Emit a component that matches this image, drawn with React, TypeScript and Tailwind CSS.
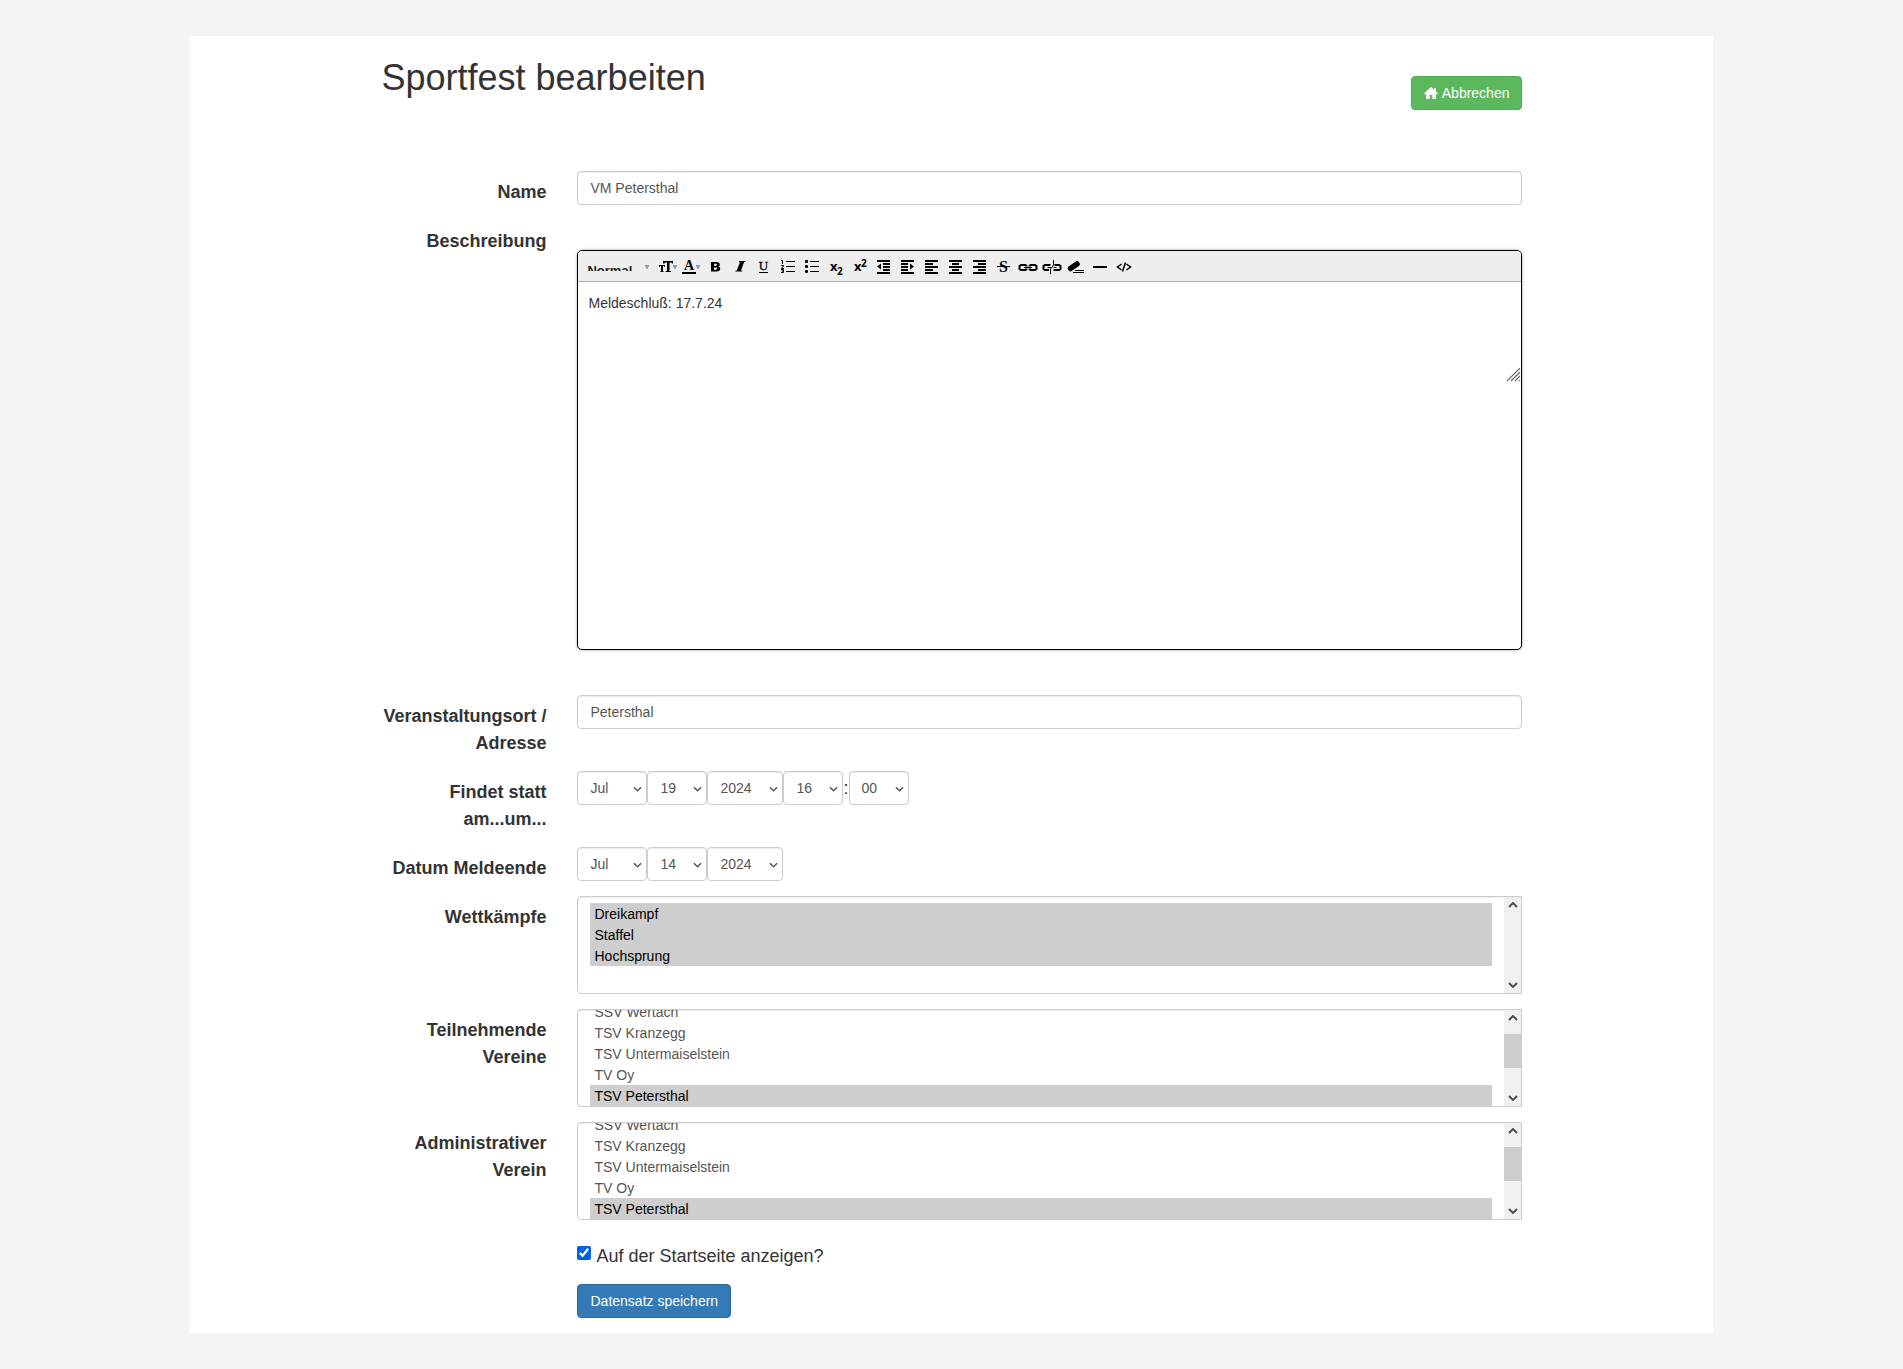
import { ReactNode, useEffect, useRef } from 'react';

const control =
  'rounded border border-[#ccc] bg-white text-sm text-[#555] shadow-[inset_0_1px_1px_rgba(0,0,0,0.075)]';

function Row({ label, id, children }: { label?: string; id?: string; children: ReactNode }) {
  return (
    <div className="mb-[15px] flex">
      <div className="-mb-px w-1/6 shrink-0 px-[15px] pt-2 text-right font-bold">
        {label && <label htmlFor={id}>{label}</label>}
      </div>
      <div className="min-w-0 flex-1 pr-[14px] pl-4">{children}</div>
    </div>
  );
}

function Chevron({ up = false, className = '' }: { up?: boolean; className?: string }) {
  return (
    <svg viewBox="0 0 10 6" className={className} fill="none" stroke="currentColor" strokeWidth="2">
      <path d={up ? 'M1 5 5 1l4 4' : 'M1 1l4 4 4-4'} />
    </svg>
  );
}

function Pick({ id, label, value, width }: { id: string; label: string; value: string; width: string }) {
  return (
    <span className={`relative ${width}`}>
      <select id={id} aria-label={label} defaultValue={value} className={`${control} h-[34px] w-full appearance-none px-3`}>
        <option>{value}</option>
      </select>
      <svg
        viewBox="0 0 10 6"
        className="pointer-events-none absolute top-[15px] right-[5px] h-[6px] w-[9px]"
        fill="none"
        stroke="#555"
        strokeWidth="1.6"
      >
        <path d="M1 1l4 4 4-4" />
      </svg>
    </span>
  );
}

function ListBox({ id, options, selected, scroll = 0 }: { id: string; options: string[]; selected: string[]; scroll?: number }) {
  const ref = useRef<HTMLSelectElement>(null);
  useEffect(() => {
    const frame = requestAnimationFrame(() => {
      if (ref.current) ref.current.scrollTop = scroll;
    });
    return () => cancelAnimationFrame(frame);
  }, [scroll]);
  return (
    <div className={`${control} flex h-[98px] overflow-hidden rounded-r-none`}>
      <select
        ref={ref}
        id={id}
        multiple
        defaultValue={selected}
        className="h-full min-w-0 flex-1 appearance-none overflow-y-scroll bg-transparent px-3 py-[6px] outline-none [scrollbar-width:none]"
      >
        {options.map((o) => (
          <option
            key={o}
            className="h-[21px] px-1 pt-[3px] pb-0 checked:bg-[linear-gradient(#cecece,#cecece)] checked:text-black"
          >
            {o}
          </option>
        ))}
      </select>
      <div className="flex w-[17px] flex-col items-center justify-between bg-[#f0f0f0] py-[5px] text-[#505050]">
        <Chevron up className="h-[6px] w-[10px]" />
        {scroll > 0 && <div className="mb-[15px] h-[34px] w-full bg-[#cdcdcd]" />}
        <Chevron className="h-[6px] w-[10px]" />
      </div>
    </div>
  );
}

const serif = { fontFamily: 'Liberation Serif, serif' };
const sans = { fontFamily: 'Open Sans, sans-serif' };

const lines = (rows: [number, number][]) =>
  rows.map(([x, w], i) => <rect key={i} x={x} y={3 + i * 3} width={w} height="2" />);

const tools: [string, ReactNode][] = [
  ['Fett', <path fillRule="evenodd" d="M5 5h5.500c2.200 0 3.300.9 3.300 2.500 0 1-.6 1.700-1.500 2 1.200.2 1.900 1 1.900 2.200 0 1.800-1.300 2.800-3.600 2.800H5zm3 1.800v2h1.700c.8 0 1.200-.3 1.200-1s-.4-1-1.200-1zm0 3.600v2.300H10c.8 0 1.200-.4 1.200-1.200s-.4-1.100-1.200-1.100z" />],
  ['Kursiv', <path d="M9 4h6.500v1h-1.300L11 13.500h1.200v1H5.500v-1h1.300L10 5H9z" />],
  ['Unterstrichen', <><text x="9.500" y="13" textAnchor="middle" fontSize="13" style={serif} stroke="#000" strokeWidth=".3">U</text><rect x="5" y="15" width="9" height="1" /></>],
  ['Nummerierte Liste', <><rect x="8" y="4" width="9" height="1" /><rect x="8" y="9" width="9" height="1" /><rect x="8" y="14" width="9" height="1" /><path fill="none" stroke="#000" d="M3 3.500h1.500V7M3 8.500h2.500v1l-2 1.500v.5H6M3 12.500h2.500v3H3m.5-1.500h2" /></>],
  ['Liste', <><rect x="8" y="4" width="9" height="1" /><rect x="8" y="9" width="9" height="1" /><rect x="8" y="14" width="9" height="1" /><rect x="3" y="3" width="3" height="3" rx="1" /><rect x="3" y="8" width="3" height="3" rx="1" /><rect x="3" y="13" width="3" height="3" rx="1" /></>],
  ['Tiefgestellt', <><text x="4" y="14" fontSize="13" fontWeight="700" style={sans}>x</text><text x="11" y="18" fontSize="10" fontWeight="700" style={sans}>2</text></>],
  ['Hochgestellt', <><text x="4" y="14" fontSize="13" fontWeight="700" style={sans}>x</text><text x="11" y="10" fontSize="10" fontWeight="700" style={sans}>2</text></>],
  ['Ausrücken', <>{lines([[3, 13], [9, 7], [9, 7], [9, 7], [3, 13]])}<path d="M3 9.500 7 6.500v6z" /></>],
  ['Einrücken', <>{lines([[3, 13], [3, 7], [3, 7], [3, 7], [3, 13]])}<path d="m16 9.500-4-3v6z" /></>],
  ['Linksbündig', lines([[3, 13], [3, 8], [3, 13], [3, 8], [3, 13]])],
  ['Zentriert', lines([[3, 13], [6, 7], [3, 13], [6, 7], [3, 13]])],
  ['Rechtsbündig', lines([[3, 13], [8, 8], [3, 13], [8, 8], [3, 13]])],
  ['Durchgestrichen', <><text x="9.500" y="15" textAnchor="middle" fontSize="16" fontWeight="700" style={serif}>S</text><rect x="3" y="9" width="13" height="1" /></>],
  ['Link', <><path fill="none" stroke="#000" strokeWidth="2" d="M8.500 9.500V9L7.500 8H3L1.500 9v3L3 13h4.500l1-1v-.5M11.500 9.500V9l1-1H17l1.500 1v3L17 13h-4.500l-1-1v-.5" /><rect x="6" y="10" width="8" height="1" /></>],
  ['Link entfernen', <><path fill="none" stroke="#000" strokeWidth="2" d="M8.500 8H3L1.500 9v3L3 13h4M12.500 8H17l1.500 1v3L17 13h-5.500" /><path fill="none" stroke="#000" d="M5.500 10.500H9M11.500 10.500h3M11.500 3v5L8.500 12v5" /></>],
  ['Formatierung entfernen', <><path fill="none" stroke="#000" strokeWidth="5.500" strokeLinecap="round" d="M4.500 11.500 11 7" /><rect x="9" y="13" width="9" height="1" /><rect x="7" y="15" width="11" height="1" /></>],
  ['Linie', <rect x="3" y="9" width="14" height="2" />],
  ['Quelltext', <path fill="none" stroke="#000" strokeWidth="1.500" d="M7.500 7 3.500 10l4 3M12.500 7l4 3-4 3M11.500 5.500 8.500 14.500" />],
];

function Caret() {
  return (
    <svg viewBox="0 0 4 4" className="h-1 w-1 fill-[#999]">
      <path d="M0 0h4v1L2.500 4h-1L0 1z" />
    </svg>
  );
}

function Editor() {
  return (
    <div className="mt-[30px] mb-[30px] h-[400px] overflow-hidden rounded-[5px] border border-black bg-white shadow-[0_0_3px_#999]">
      <div role="toolbar" aria-label="Formatierung" className="flex h-[31px] items-center border-b border-[#b0b0b0] bg-[#eee] pt-0.5 pl-[9px]">
        <button type="button" className="flex w-[62px] items-center justify-between">
          <span className="h-[7px] w-[50px] overflow-hidden text-left text-[13px] leading-[14px] font-bold text-[#222]">Normal</span>
          <Caret />
        </button>
        <button type="button" aria-label="Schriftgröße" className="ml-[10px] flex h-5 w-[18px] items-center">
          <svg viewBox="0 0 14 20" className="h-5 w-[14px]">
            <path d="M4 4h10v2.500h-1L12.500 5.500H10.500V14H12v1H6.500v-1H8V5.500H6L5.500 6.500H4zM0 8h6v2H5.500L5 9H4v5h.5v1H1.500v-1H2V9H1L.5 10H0z" />
          </svg>
          <Caret />
        </button>
        <button type="button" aria-label="Textfarbe" className="ml-[5px] flex h-5 w-[19px] items-center">
          <svg viewBox="0 0 14 20" className="h-5 w-[14px]">
            <text x="7" y="13" textAnchor="middle" fontSize="14" fontWeight="700" style={serif}>A</text>
            <rect x="0" y="15" width="14" height="2" />
          </svg>
          <Caret />
        </button>
        <div className="ml-[5px] flex gap-1">
          {tools.map(([name, art]) => (
            <button key={name} type="button" aria-label={name} className="size-5">
              <svg viewBox="0 0 20 20" className="size-5">{art}</svg>
            </button>
          ))}
        </div>
      </div>
      <textarea
        id="beschreibung"
        defaultValue="Meldeschluß: 17.7.24"
        className="block h-[100px] w-full resize-none px-[10px] py-[11px] text-sm leading-[21px] text-[#333] outline-none"
      />
      <svg viewBox="0 0 14 14" className="-mt-[14px] ml-auto h-[14px] w-[14px]" fill="none" stroke="#666" strokeWidth="1.200">
        <path d="M0 13 13 0M4 13l9-9M8 13l5-5M12 13l1-1" />
      </svg>
    </div>
  );
}

const clubs = ['SSV Wertach', 'TSV Kranzegg', 'TSV Untermaiselstein', 'TV Oy', 'TSV Petersthal'];

export default function App() {
  return (
    <div className="min-h-screen bg-[#f4f4f4] py-9 text-lg leading-[27px] text-[#333] [font-family:'Liberation_Sans',Arial,sans-serif]">
      <main className="mx-auto w-4/5 bg-white">
        <div className="mx-auto max-w-[1170px]">
          <header className="mb-[61px] flex items-start justify-between pt-5 pr-[14px] pl-[15px]">
            <h1 className="text-[36px] leading-[44px]">Sportfest bearbeiten</h1>
            <a href="#" className="mt-5 flex h-[34px] items-center gap-1 rounded border border-[#4cae4c] bg-[#5cb85c] px-3 text-sm text-white">
              <svg viewBox="0 0 14 14" className="size-[14px] fill-white">
                <path d="M7 1 0 7.500l.8.9L2 7.500V13h3.700V9h2.600v4H12V7.500l1.200.9.8-.9-2-1.900V2h-2v1.800z" />
              </svg>
              Abbrechen
            </a>
          </header>
          <form onSubmit={(e) => e.preventDefault()}>
            <Row label="Name" id="name">
              <input id="name" defaultValue="VM Petersthal" className={`${control} block h-[34px] w-full px-3`} />
            </Row>
            <Row label="Beschreibung" id="beschreibung">
              <Editor />
            </Row>
            <Row label="Veranstaltungsort / Adresse" id="ort">
              <input id="ort" defaultValue="Petersthal" className={`${control} block h-[34px] w-full px-3`} />
            </Row>
            <Row label="Findet statt am...um..." id="monat">
              <div className="flex items-center">
                <Pick id="monat" label="Monat" value="Jul" width="w-[70px]" />
                <Pick id="tag" label="Tag" value="19" width="w-[60px]" />
                <Pick id="jahr" label="Jahr" value="2024" width="w-[76px]" />
                <Pick id="stunde" label="Stunde" value="16" width="w-[60px]" />
                <span>:</span>
                <Pick id="minute" label="Minute" value="00" width="w-[60px]" />
              </div>
            </Row>
            <Row label="Datum Meldeende" id="ende-monat">
              <div className="flex">
                <Pick id="ende-monat" label="Monat" value="Jul" width="w-[70px]" />
                <Pick id="ende-tag" label="Tag" value="14" width="w-[60px]" />
                <Pick id="ende-jahr" label="Jahr" value="2024" width="w-[76px]" />
              </div>
            </Row>
            <Row label="Wettkämpfe" id="wettkaempfe">
              <ListBox id="wettkaempfe" options={['Dreikampf', 'Staffel', 'Hochsprung']} selected={['Dreikampf', 'Staffel', 'Hochsprung']} />
            </Row>
            <Row label="Teilnehmende Vereine" id="vereine">
              <ListBox id="vereine" options={clubs} selected={['TSV Petersthal']} scroll={15} />
            </Row>
            <Row label="Administrativer Verein" id="admin">
              <ListBox id="admin" options={clubs} selected={['TSV Petersthal']} scroll={15} />
            </Row>
            <Row>
              <label className="-mb-px flex items-start gap-[5px] pt-2">
                <input type="checkbox" defaultChecked className="mt-[3px] size-[14px] accent-[#0060df]" />
                Auf der Startseite anzeigen?
              </label>
            </Row>
            <div className="flex pb-[15px]">
              <div className="ml-[16.6667%] pl-4">
                <button type="submit" className="h-[34px] rounded border border-[#2e6da4] bg-[#337ab7] px-3 text-sm text-white">
                  Datensatz speichern
                </button>
              </div>
            </div>
          </form>
        </div>
      </main>
    </div>
  );
}
